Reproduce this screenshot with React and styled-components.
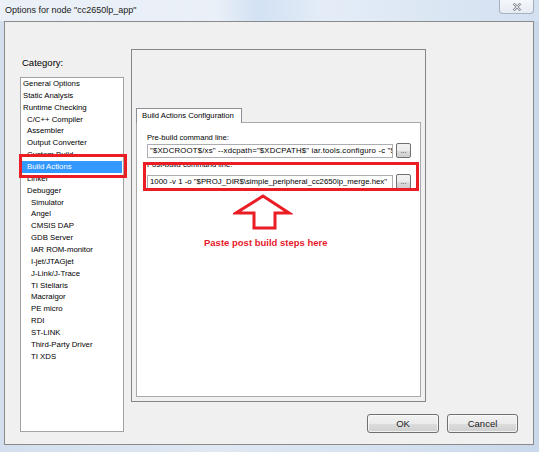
import React from "react";
import styled, { createGlobalStyle } from "styled-components";

const Global = createGlobalStyle`
  html, body { margin: 0; padding: 0; overflow: hidden; background: #cdd9e8; }
  * { box-sizing: border-box; }
`;

const Win = styled.div`
  width: 539px;
  height: 452px;
  display: flex;
  flex-direction: column;
  background: linear-gradient(90deg, #d3dfee 0%, #dfe8f3 40%, #d6e2f1 70%, #c9d8ea 100%);
  font-family: "Liberation Sans", Arial, sans-serif;
  color: #000;
`;

const TitleBar = styled.div`
  height: 21px;
  display: flex;
  align-items: flex-start;
  justify-content: space-between;
  padding-left: 5px;
  padding-right: 5px;
  background: linear-gradient(90deg, rgba(255,255,255,0.55) 0%, rgba(255,255,255,0.35) 40%, rgba(200,220,245,0.5) 48%, rgba(235,242,250,0.6) 60%, rgba(220,232,246,0.5) 100%);
`;

const Title = styled.div`
  font-size: 9px;
  line-height: 9px;
  margin-top: 6px;
  color: #1a1a1a;
  white-space: nowrap;
`;

const CloseBtn = styled.div`
  width: 35px;
  height: 14px;
  border: 1px solid #a6b1bf;
  border-top: none;
  border-radius: 0 0 4px 4px;
  background: linear-gradient(#f4f7fb, #e6ecf3);
  display: flex;
  align-items: center;
  justify-content: center;
`;

const Client = styled.div`
  margin: 0 5px 0 4px;
  height: 424px;
  border: 1px solid #8a8a8a;
  background: #f0f0f0;
  display: flex;
  padding-left: 15px;
`;

const LeftCol = styled.div`
  width: 104px;
  padding-top: 35px;
  display: flex;
  flex-direction: column;
`;

const CatLabel = styled.div`
  font-size: 9.5px;
  line-height: 12px;
  padding-left: 2px;
`;

const ListWrap = styled.div`
  position: relative;
  margin-top: 8px;
`;

const ListBox = styled.div`
  height: 355px;
  border: 1px solid #a3a3a3;
  background: #fff;
  overflow: hidden;
`;

const Item = styled.div`
  height: 11.87px;
  line-height: 11.87px;
  font-size: 7.8px;
  white-space: nowrap;
  margin: 0 1px;
  padding-left: ${p => 1 + p.$level * 4}px;
  background: ${p => (p.$selected ? "#3399ff" : "transparent")};
  color: ${p => (p.$selected ? "#fff" : "#000")};
`;

const RedBox = styled.div`
  position: absolute;
  border: 3px solid #ea1c24;
  left: ${p => p.$x}px;
  top: ${p => p.$y}px;
  width: ${p => p.$w}px;
  height: ${p => p.$h}px;
  pointer-events: none;
`;

const RightCol = styled.div`
  margin-left: 7px;
  width: 387px;
  display: flex;
  flex-direction: column;
`;

const Frame = styled.div`
  margin-top: 27px;
  width: 295px;
  height: 353px;
  border: 1px solid #858585;
  padding: 58px 4px 4px 4px;
  display: flex;
  flex-direction: column;
`;

const Tab = styled.div`
  width: 106px;
  height: 15px;
  border: 1px solid #8c8f96;
  border-bottom: none;
  background: #fff;
  font-size: 7.7px;
  line-height: 13px;
  padding-left: 5px;
  white-space: nowrap;
  margin-bottom: -1px;
  position: relative;
  z-index: 1;
`;

const TabPage = styled.div`
  position: relative;
  flex: 1;
  border: 1px solid #a9a9a9;
  background: #fff;
  padding: 10px 0 0 10px;
`;

const FieldLabel = styled.div`
  font-size: 7.6px;
  line-height: 10px;
  white-space: nowrap;
  margin-top: ${p => p.$mt || 0}px;
`;

const FieldRow = styled.div`
  display: flex;
  align-items: center;
  gap: 3px;
  margin-top: ${p => p.$mt || 0}px;
`;

const TextBox = styled.div`
  width: 246px;
  height: 14px;
  border: 1px solid #abadb3;
  background: #fff;
  font-size: 7.8px;
  line-height: 12px;
  padding-left: 2px;
  white-space: nowrap;
  overflow: hidden;
  letter-spacing: ${p => p.$ls || 0}px;
`;

const DotsBtn = styled.div`
  width: 15px;
  height: 15px;
  border: 1px solid #707070;
  border-radius: 2px;
  background: linear-gradient(#f3f3f3 0%, #ebebeb 50%, #dcdcdc 51%, #cfcfcf 100%);
  font-size: 7px;
  line-height: 13px;
  text-align: center;
  color: #333;
`;

const Arrow = styled.svg`
  position: absolute;
  left: 96px;
  top: 71px;
`;

const Note = styled.div`
  position: absolute;
  left: 67px;
  top: 114px;
  font-size: 9.5px;
  line-height: 12px;
  font-weight: bold;
  color: #e8192c;
  white-space: nowrap;
`;

const ButtonRow = styled.div`
  margin-top: 12px;
  display: flex;
  justify-content: flex-end;
  gap: 8px;
`;

const DlgButton = styled.div`
  width: ${p => p.$w}px;
  height: 19px;
  border: 1px solid #707070;
  border-radius: 3px;
  background: linear-gradient(#f2f2f2 0%, #ebebeb 50%, #dddddd 51%, #cfcfcf 100%);
  box-shadow: inset 0 0 0 1px rgba(255,255,255,0.7);
  font-size: 9.5px;
  line-height: 17px;
  text-align: center;
  color: #222;
`;

const items = [
  ["General Options", 0],
  ["Static Analysis", 0],
  ["Runtime Checking", 0],
  ["C/C++ Compiler", 1],
  ["Assembler", 1],
  ["Output Converter", 1],
  ["Custom Build", 1],
  ["Build Actions", 1, true],
  ["Linker", 1],
  ["Debugger", 1],
  ["Simulator", 2],
  ["Angel", 2],
  ["CMSIS DAP", 2],
  ["GDB Server", 2],
  ["IAR ROM-monitor", 2],
  ["I-jet/JTAGjet", 2],
  ["J-Link/J-Trace", 2],
  ["TI Stellaris", 2],
  ["Macraigor", 2],
  ["PE micro", 2],
  ["RDI", 2],
  ["ST-LINK", 2],
  ["Third-Party Driver", 2],
  ["TI XDS", 2],
];

export default function App() {
  return (
    <>
      <Global />
      <Win>
        <TitleBar>
          <Title>Options for node "cc2650lp_app"</Title>
          <CloseBtn>
            <svg width="10" height="8" viewBox="0 0 10 8">
              <path d="M1.5 0.5 L8.5 7.5 M8.5 0.5 L1.5 7.5" stroke="#8a8f98" strokeWidth="2.4" fill="none" />
              <path d="M1.5 0.5 L8.5 7.5 M8.5 0.5 L1.5 7.5" stroke="#f4f6f9" strokeWidth="0.8" fill="none" />
            </svg>
          </CloseBtn>
        </TitleBar>
        <Client>
          <LeftCol>
            <CatLabel>Category:</CatLabel>
            <ListWrap>
              <ListBox>
                {items.map(([t, l, s]) => (
                  <Item key={t} $level={l} $selected={s}>{t}</Item>
                ))}
              </ListBox>
              <RedBox $x={-1} $y={77} $w={108} $h={24} />
            </ListWrap>
          </LeftCol>
          <RightCol>
            <Frame>
              <Tab>Build Actions Configuration</Tab>
              <TabPage>
                <FieldLabel>Pre-build command line:</FieldLabel>
                <FieldRow>
                  <TextBox $ls={0.18}>"$XDCROOT$/xs" --xdcpath="$XDCPATH$" iar.tools.configuro -c "$</TextBox>
                  <DotsBtn>...</DotsBtn>
                </FieldRow>
                <FieldLabel $mt={2}>Post-build command line:</FieldLabel>
                <FieldRow $mt={4}>
                  <TextBox>1000 -v 1 -o "$PROJ_DIR$\simple_peripheral_cc2650lp_merge.hex"</TextBox>
                  <DotsBtn>...</DotsBtn>
                </FieldRow>
                <RedBox $x={6} $y={39} $w={276} $h={29} />
                <Arrow width="60" height="38" viewBox="0 0 60 38">
                  <path d="M30 2 L3 19 L21 19 L21 34 L42 34 L42 19 L56 19 Z" fill="#fff" stroke="#ea1c24" strokeWidth="3" strokeLinejoin="miter" />
                </Arrow>
                <Note>Paste post build steps here</Note>
              </TabPage>
            </Frame>
            <ButtonRow>
              <DlgButton $w={72}>OK</DlgButton>
              <DlgButton $w={71}>Cancel</DlgButton>
            </ButtonRow>
          </RightCol>
        </Client>
      </Win>
    </>
  );
}
